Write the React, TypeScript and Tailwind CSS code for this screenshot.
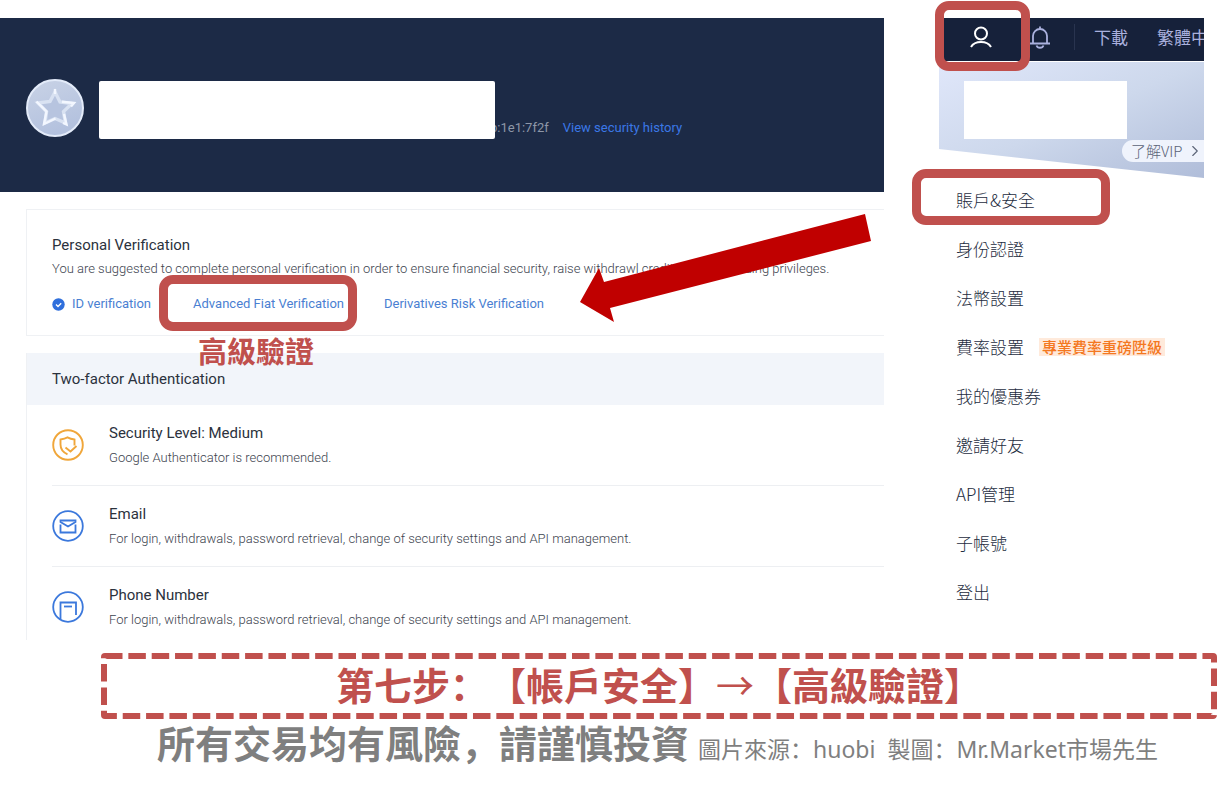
import type { ReactNode } from 'react';
import { ChevronRight } from 'lucide-react';

// Entries of the account drop-down
const menuItems = [
  { label: '賬戶&安全', marked: true },
  { label: '身份認證' },
  { label: '法幣設置' },
  { label: '費率設置', badge: '專業費率重磅陞級' },
  { label: '我的優惠券' },
  { label: '邀請好友' },
  { label: 'API管理' },
  { label: '子帳號' },
  { label: '登出' },
];

// Red rounded frame that points out a control, placed by its caller
function Marker({ className }: { className: string }) {
  return (
    <span
      aria-hidden="true"
      className={`pointer-events-none absolute z-10 rounded-[14px] border-[9px] border-[#c0504d] ${className}`}
    />
  );
}

function Medal() {
  return (
    <svg viewBox="0 0 58 58" className="h-[58px] w-[58px] shrink-0" aria-hidden="true">
      <defs>
        <linearGradient id="disc" x1="0" y1="0" x2="0.4" y2="1">
          <stop offset="0" stopColor="#c9d3e6" />
          <stop offset="1" stopColor="#b3c1de" />
        </linearGradient>
      </defs>
      <circle cx="29" cy="29" r="28" fill="url(#disc)" stroke="#e3ebf9" strokeWidth="2" />
      <path
        d="M29 13l5 10L46 24.500 37.500 32.500 39.500 44 29 39.500 19 44 20.500 32.500 12 24 24 22.500z"
        fill="#b7c4df"
        stroke="#d9e2f2"
        strokeWidth="3.400"
      />
      <path
        d="M10.500 22.500L20.500 32.500 18 45 29.500 39.500M29 10v5M36 22.800L48 24l-3 3.500M38 35l2.500 10.500-3.500-1.500"
        fill="none"
        stroke="#f3f7ff"
        strokeWidth="2.400"
      />
    </svg>
  );
}

function ShieldIcon() {
  return (
    <svg viewBox="0 0 32 32" className="h-8 w-8 shrink-0 text-[#f0a63a]" fill="none" stroke="currentColor" strokeWidth="1.900" aria-hidden="true">
      <circle cx="16" cy="16" r="14.800" />
      <path d="M22.500 16.500V10.500C19.500 10 17.500 9.300 15.500 8.300 13.500 9.300 11 10 8.500 10.500V15.500c0 4.500 2.500 7.800 7 9.800" />
      <path d="M13.500 18.500l5 4 6-5.500" />
    </svg>
  );
}

function MailIcon() {
  return (
    <svg viewBox="0 0 32 32" className="h-8 w-8 shrink-0 text-[#3b78dc]" fill="none" stroke="currentColor" strokeWidth="1.800" aria-hidden="true">
      <circle cx="16" cy="16" r="14.800" />
      <path d="M8.500 14.500v8h15v-8" />
      <path d="M8.500 10.500h15v1.500L16 16.500 8.500 12z" />
    </svg>
  );
}

function PhoneIcon() {
  return (
    <svg viewBox="0 0 32 32" className="h-8 w-8 shrink-0 text-[#3b78dc]" fill="none" stroke="currentColor" strokeWidth="1.800" aria-hidden="true">
      <circle cx="16" cy="16" r="14.800" />
      <path d="M8.500 28V11.500h15.500v12.500" />
      <path d="M12 15.500h8" />
    </svg>
  );
}

function Row({ icon, title, text }: { icon: ReactNode; title: string; text: string }) {
  return (
    <li className="flex items-start gap-[25px] border-b border-[#edeff2] pt-4 pb-[15px] last:border-b-0 last:pb-2">
      <div className="pt-2">{icon}</div>
      <div>
        <h3 className="text-[15px] leading-6 text-[#2b323d]">{title}</h3>
        <p className="text-[13px] leading-[25px] font-light text-[#3c434e]">{text}</p>
      </div>
    </li>
  );
}

function SecurityPage() {
  return (
    <main className="relative min-w-0 flex-1 overflow-hidden font-['Roboto',sans-serif]">
      <header className="flex h-[174px] items-start bg-[#1c2a46] pt-[61px] pl-[26px]">
        <Medal />
        <div className="relative z-10 mt-[2px] ml-[15px] h-[58px] w-[396px] rounded-[2px] bg-white" />
        <p className="mt-[39px] -ml-[5px] text-[13px] leading-5 text-[#8e97a8]">b:1e1:7f2f</p>
        <a href="#history" className="mt-[39px] ml-[14px] text-[13px] leading-5 text-[#3b78e7]">
          View security history
        </a>
      </header>

      <section className="mt-[17px] ml-[26px] border border-r-0 border-[#eff1f4] pt-[23px] pb-[21px] pl-[25px]">
        <h2 className="text-[15px] leading-6 text-[#2b323d]">Personal Verification</h2>
        <p className="text-[13px] leading-6 font-light whitespace-nowrap text-[#3c434e]">
          You are suggested to complete personal verification in order to ensure financial security, raise withdrawl
          credits and get trading privileges.
        </p>
        <div className="mt-[13px] flex text-[13px] leading-5 whitespace-nowrap text-[#4a7fd2]">
          <a href="#id" className="flex items-center gap-[7px]">
            <svg viewBox="0 0 13 13" className="h-[13px] w-[13px]" aria-hidden="true">
              <circle cx="6.500" cy="6.500" r="6.200" fill="#2f6fdc" />
              <path d="M4 6.500l2 1.900 3.200-3.200" fill="none" stroke="#fff" strokeWidth="1.400" />
            </svg>
            ID verification
          </a>
          <a href="#fiat" className="relative ml-[42px]">
            Advanced Fiat Verification
            <Marker className="-top-[19px] -right-[13px] -bottom-[17px] -left-[34px]" />
            <strong className="absolute top-9 left-[5px] z-10 font-['Noto_Sans_CJK_TC',sans-serif] text-[29px] leading-10 font-bold text-[#c0504d]">
              高級驗證
            </strong>
          </a>
          <a href="#derivatives" className="ml-[40px]">
            Derivatives Risk Verification
          </a>
        </div>
      </section>

      <section className="mt-[17px] ml-[26px] border-l border-[#eff1f4]">
        <h2 className="bg-[#f2f5fa] py-[14px] pl-[25px] text-[15px] leading-6 text-[#2b323d]">
          Two-factor Authentication
        </h2>
        <ul className="pl-[25px]">
          <Row icon={<ShieldIcon />} title="Security Level: Medium" text="Google Authenticator is recommended." />
          <Row
            icon={<MailIcon />}
            title="Email"
            text="For login, withdrawals, password retrieval, change of security settings and API management."
          />
          <Row
            icon={<PhoneIcon />}
            title="Phone Number"
            text="For login, withdrawals, password retrieval, change of security settings and API management."
          />
        </ul>
      </section>

      {/* Arrow laid over the verification card */}
      <svg viewBox="0 0 292 109" className="absolute top-[196px] left-[579px] h-[109px] w-[292px]" aria-hidden="true">
        <path d="M1 88L20 54l5 14L286 0l6 27L31 94l4 14z" fill="#c00000" />
      </svg>
    </main>
  );
}

function AccountMenu() {
  return (
    <aside className="w-[320px] shrink-0 pl-[55px] font-['Noto_Sans_CJK_TC',sans-serif]">
      <nav className="relative flex h-[43px] items-center bg-[#16213a] pb-[5px] text-[17px] text-[#aab1de]">
        <button type="button" aria-label="Account" className="ml-[30px] text-white">
          <svg viewBox="0 0 24 24" className="h-6 w-6" fill="none" stroke="currentColor" strokeWidth="2" aria-hidden="true">
            <circle cx="12" cy="8.500" r="6" />
            <path d="M2 22c2-3.500 5.500-5 10-5s8 1.500 10 5" />
          </svg>
        </button>
        <Marker className="-top-[17px] -left-1 h-[70px] w-[95px]" />
        <button type="button" aria-label="Notifications" className="ml-[35px]">
          <svg viewBox="0 0 24 24" className="h-6 w-6" fill="none" stroke="currentColor" strokeWidth="1.800" aria-hidden="true">
            <path d="M2 18.500h20M5 18.500V11a7 7 0 0 1 14 0v7.500M12 4V1.500M8.500 20.500c1 3 6 3 7 0" />
          </svg>
        </button>
        <span className="ml-[22px] h-[26px] w-px bg-[#29344f]" />
        <a href="#download" className="ml-[19px] shrink-0">
          下載
        </a>
        <span className="ml-[29px] min-w-0 flex-1 overflow-hidden whitespace-nowrap">繁體中文</span>
      </nav>

      <div className="mt-px flex h-[116px] items-start bg-linear-to-br from-[#e0e7fa] via-[#cdd8ec] to-[#b0bdd9] pt-[19px] pl-[25px] [clip-path:polygon(0_0,100%_0,100%_100%,0_75%)]">
        <div className="h-[58px] w-[163px] shrink-0 bg-white" />
        <a
          href="#vip"
          className="mt-[59px] -ml-[5px] flex h-[22px] flex-1 items-center rounded-l-full bg-[#eff3fc] pl-[9px] text-[15px] font-light whitespace-nowrap text-[#5b6478]"
        >
          了解VIP
          <ChevronRight className="ml-[3px] h-[18px] w-[18px]" strokeWidth={1.5} />
        </a>
      </div>

      <ul className="flex flex-col gap-[21px] pt-2 pl-[17px] text-[17px] leading-7 font-light text-[#1d2c40]">
        {menuItems.map((item) => (
          <li key={item.label} className="relative flex items-center">
            <a href="#menu">{item.label}</a>
            {item.badge && (
              <span className="ml-[15px] bg-[#ffeadb] px-[3px] text-[15px] leading-[18px] font-medium text-[#f4781f]">
                {item.badge}
              </span>
            )}
            {item.marked && <Marker className="-top-[17px] -left-[44px] h-14 w-[198px]" />}
          </li>
        ))}
      </ul>
    </aside>
  );
}

export default function App() {
  return (
    <div className="overflow-hidden bg-white">
      <div className="flex pt-[18px] pr-[13px]">
        <SecurityPage />
        <AccountMenu />
      </div>

      <div className="relative mt-[13px] ml-[101px]">
        {/* Dashed frame, long dashes and short gaps */}
        <svg className="absolute inset-0 h-full w-full" aria-hidden="true">
          <rect
            x="3"
            y="3"
            rx="1"
            className="h-[calc(100%-6px)] w-[calc(100%-6px)]"
            fill="none"
            stroke="#c0504d"
            strokeWidth="6"
            strokeDasharray="17.500 5.850"
          />
        </svg>
        <h1 className="pt-[7px] pb-[11px] text-center font-['Noto_Sans_CJK_SC',sans-serif] text-[38px] leading-[48px] font-bold text-[#c0504d] [text-spacing-trim:space-all]">
          第七步：【帳戶安全】<span className="font-normal">→</span>【高級驗證】
        </h1>
      </div>

      <footer className="flex items-baseline gap-[9px] pb-4 pl-[157px] font-['Noto_Sans','Noto_Sans_CJK_SC',sans-serif] whitespace-nowrap text-[#7f7f7f]">
        <strong className="text-[38px] leading-[48px] font-bold">所有交易均有風險，請謹慎投資</strong>
        <span className="text-[23px]">圖片來源：huobi&nbsp; 製圖：Mr.Market市場先生</span>
      </footer>
    </div>
  );
}
